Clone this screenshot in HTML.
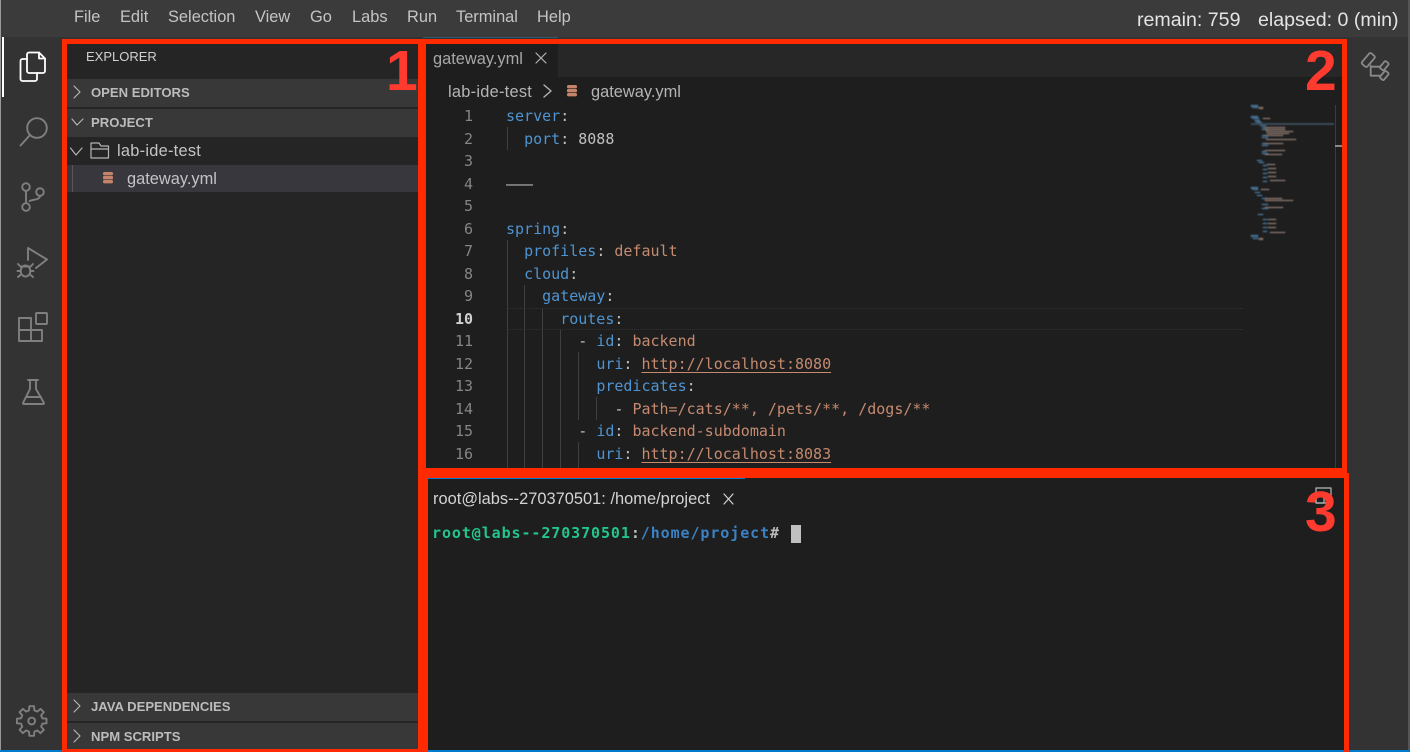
<!DOCTYPE html>
<html><head><meta charset="utf-8"><style>
html,body{margin:0;padding:0;background:#333}
#r{position:relative;width:1410px;height:752px;overflow:hidden;background:#333;font-family:"Liberation Sans",sans-serif}
.b{position:absolute}
.t{position:absolute;white-space:nowrap;font-size:16.4px;line-height:20px;color:#c4c4c4}
.h{position:absolute;white-space:nowrap;font-size:13.1px;font-weight:bold;line-height:16px;color:#bcbcbc}
.n{position:absolute;left:430px;width:43px;text-align:right;font:15px/22px "DejaVu Sans Mono",monospace;color:#858585}
.c{position:absolute;white-space:pre;font:15px/22px "DejaVu Sans Mono",monospace;color:#c0c0c0}
.k{color:#4f94d0}.s{color:#c58a70}.u{color:#c58a70;text-decoration:underline;text-underline-offset:3px}
.g{position:absolute;width:1px;background:#3f3f3f}
.d{position:absolute;font-size:57px;font-weight:bold;line-height:60px;color:#ff3b30}
svg{position:absolute;left:0;top:0;overflow:visible}
</style></head><body><div id="r">
<div class="b" style="left:0;top:0;width:1410px;height:37px;background:#3b3b3b"></div>
<div class="b" style="left:0;top:0;width:1px;height:752px;background:#999"></div>
<div class="b" style="left:1408px;top:0;width:2px;height:752px;background:#555"></div>
<div class="b" style="left:2px;top:37px;width:2px;height:60px;background:#fff"></div>
<div class="b" style="left:0;top:750px;width:1410px;height:2px;background:#007acc"></div>
<div class="b" style="left:423px;top:37px;width:135px;height:1px;background:#2f5a75"></div>

<div class="t" style="left:74px;top:7px">File</div>
<div class="t" style="left:120px;top:7px">Edit</div>
<div class="t" style="left:168px;top:7px">Selection</div>
<div class="t" style="left:255px;top:7px">View</div>
<div class="t" style="left:310px;top:7px">Go</div>
<div class="t" style="left:352px;top:7px">Labs</div>
<div class="t" style="left:407px;top:7px">Run</div>
<div class="t" style="left:456px;top:7px">Terminal</div>
<div class="t" style="left:537px;top:7px">Help</div>
<div class="t" style="left:1137px;top:10px;color:#e4e4e4;font-size:19.6px">remain: 759</div>
<div class="t" style="left:1258px;top:10px;color:#e4e4e4;font-size:19.6px">elapsed: 0 (min)</div>

<!-- sidebar -->
<div class="b" style="left:67px;top:44px;width:351px;height:705px;background:#252526"></div>
<div class="b" style="left:67px;top:79px;width:351px;height:28px;background:#383838"></div>
<div class="b" style="left:67px;top:109px;width:351px;height:28px;background:#383838"></div>
<div class="b" style="left:67px;top:165px;width:351px;height:27px;background:#37373d"></div>
<div class="b" style="left:67px;top:693px;width:351px;height:28px;background:#383838"></div>
<div class="b" style="left:67px;top:723px;width:351px;height:26px;background:#383838"></div>
<div class="b" style="left:72px;top:165px;width:1px;height:27px;background:#585858"></div>
<div class="t" style="left:86px;top:49px;font-size:13px;line-height:16px;color:#d0d0d0">EXPLORER</div>
<div class="h" style="left:91px;top:85px">OPEN EDITORS</div>
<div class="h" style="left:91px;top:115px">PROJECT</div>
<div class="t" style="left:117px;top:141px;letter-spacing:.25px">lab-ide-test</div>
<div class="t" style="left:127px;top:169px">gateway.yml</div>
<div class="h" style="left:91px;top:699px">JAVA DEPENDENCIES</div>
<div class="h" style="left:91px;top:729px">NPM SCRIPTS</div>

<!-- editor -->
<div class="b" style="left:426px;top:44px;width:916px;height:424px;background:#1e1e1e"></div>
<div class="b" style="left:558px;top:44px;width:784px;height:33px;background:#272727"></div>
<div class="t" style="left:433px;top:49px;color:#a8a8a8">gateway.yml</div>
<div class="t" style="left:448px;top:82px;letter-spacing:.25px;color:#b4b4b4">lab-ide-test</div>
<div class="t" style="left:591px;top:82px;color:#b4b4b4">gateway.yml</div>

<div class="b" style="left:507px;top:308px;width:736px;height:22px;border-top:1px dotted #333;border-bottom:1px dotted #333;box-sizing:border-box"></div>

<div class="g" style="left:507px;top:127px;height:23px"></div>
<div class="g" style="left:507px;top:240px;height:228px"></div>
<div class="g" style="left:524px;top:285px;height:183px"></div>
<div class="g" style="left:542px;top:308px;height:160px"></div>
<div class="g" style="left:560px;top:330px;height:138px"></div>
<div class="g" style="left:578px;top:352px;height:68px"></div>
<div class="g" style="left:578px;top:442px;height:26px"></div>
<div class="g" style="left:596px;top:397px;height:23px"></div>

<div class="n" style="top:105px">1</div><div class="c" style="left:506px;top:105px"><span class="k">server</span>:</div>
<div class="n" style="top:127.5px">2</div><div class="c" style="left:506px;top:127.5px">  <span class="k">port</span>: 8088</div>
<div class="n" style="top:150px">3</div>
<div class="n" style="top:172.6px">4</div><div class="c" style="left:506px;top:172.6px">–––</div>
<div class="n" style="top:195.1px">5</div>
<div class="n" style="top:217.6px">6</div><div class="c" style="left:506px;top:217.6px"><span class="k">spring</span>:</div>
<div class="n" style="top:240.2px">7</div><div class="c" style="left:506px;top:240.2px">  <span class="k">profiles</span>: <span class="s">default</span></div>
<div class="n" style="top:262.7px">8</div><div class="c" style="left:506px;top:262.7px">  <span class="k">cloud</span>:</div>
<div class="n" style="top:285.2px">9</div><div class="c" style="left:506px;top:285.2px">    <span class="k">gateway</span>:</div>
<div class="n" style="top:307.8px;color:#d0d0d0;font-weight:bold">10</div><div class="c" style="left:506px;top:307.8px">      <span class="k">routes</span>:</div>
<div class="n" style="top:330.3px">11</div><div class="c" style="left:506px;top:330.3px">        - <span class="k">id</span>: <span class="s">backend</span></div>
<div class="n" style="top:352.8px">12</div><div class="c" style="left:506px;top:352.8px">          <span class="k">uri</span>: <span class="u">http://localhost:8080</span></div>
<div class="n" style="top:375.4px">13</div><div class="c" style="left:506px;top:375.4px">          <span class="k">predicates</span>:</div>
<div class="n" style="top:397.9px">14</div><div class="c" style="left:506px;top:397.9px">            - <span class="s">Path=/cats/**, /pets/**, /dogs/**</span></div>
<div class="n" style="top:420.4px">15</div><div class="c" style="left:506px;top:420.4px">        - <span class="k">id</span>: <span class="s">backend-subdomain</span></div>
<div class="n" style="top:443px">16</div><div class="c" style="left:506px;top:443px">          <span class="k">uri</span>: <span class="u">http://localhost:8083</span></div>

<!-- minimap -->
<svg width="1410" height="752">
<g style="filter:blur(.4px)">
<g fill="#4a7fa8" opacity=".8" stroke="#4a7fa8" stroke-width=".5">
<rect x="1251" y="105" width="7" height="2"/><rect x="1253" y="107" width="5" height="1"/><rect x="1251" y="116" width="7" height="2"/><rect x="1253" y="118" width="6" height="1"/><rect x="1255" y="120" width="5" height="2"/><rect x="1257" y="122" width="5" height="2"/>
<rect x="1260" y="125" width="6" height="1"/><rect x="1262" y="127" width="4" height="1"/><rect x="1262" y="129" width="6" height="1"/><rect x="1262" y="135" width="4" height="1"/><rect x="1262" y="137" width="6" height="1"/><rect x="1262" y="143" width="4" height="1"/><rect x="1262" y="145" width="6" height="1"/><rect x="1262" y="151" width="4" height="1"/><rect x="1262" y="153" width="6" height="1"/>
<rect x="1257" y="160" width="5" height="1"/><rect x="1259" y="162" width="5" height="1"/><rect x="1263" y="165" width="4" height="1"/><rect x="1263" y="169" width="4" height="1"/><rect x="1263" y="173" width="4" height="1"/><rect x="1263" y="177" width="4" height="1"/><rect x="1263" y="181" width="4" height="1"/>
<rect x="1251" y="187" width="7" height="2"/><rect x="1253" y="189" width="5" height="1"/><rect x="1255" y="192" width="5" height="1"/><rect x="1257" y="195" width="5" height="1"/><rect x="1262" y="198" width="4" height="1"/><rect x="1262" y="204" width="6" height="1"/><rect x="1262" y="208" width="6" height="1"/><rect x="1258" y="214" width="5" height="1"/><rect x="1263" y="219" width="4" height="1"/><rect x="1263" y="223" width="4" height="1"/><rect x="1263" y="227" width="4" height="1"/><rect x="1263" y="231" width="4" height="1"/>
<rect x="1251" y="235" width="7" height="2"/><rect x="1253" y="238" width="5" height="1"/>
</g>
<rect x="1251" y="123" width="83" height="2" fill="#3a4a58"/>
<g fill="#8c7a70" opacity=".85" stroke="#8c7a70" stroke-width=".5">
<rect x="1259" y="107" width="4" height="2"/><rect x="1263" y="118" width="7" height="1"/><rect x="1265" y="127" width="20" height="1"/><rect x="1265" y="129" width="20" height="1"/><rect x="1266" y="131" width="27" height="1"/><rect x="1267" y="133" width="22" height="1"/><rect x="1265" y="135" width="18" height="1"/><rect x="1266" y="139" width="30" height="1"/><rect x="1265" y="143" width="18" height="1"/><rect x="1265" y="150" width="20" height="1"/><rect x="1265" y="154" width="17" height="1"/>
<rect x="1267" y="164" width="8" height="1"/><rect x="1268" y="168" width="8" height="1"/><rect x="1268" y="172" width="8" height="1"/><rect x="1268" y="176" width="8" height="1"/><rect x="1270" y="180" width="15" height="1"/>
<rect x="1261" y="189" width="8" height="1"/><rect x="1265" y="198" width="17" height="1"/><rect x="1265" y="200" width="28" height="1"/><rect x="1265" y="207" width="18" height="1"/><rect x="1268" y="219" width="8" height="1"/><rect x="1268" y="223" width="8" height="1"/><rect x="1268" y="227" width="8" height="1"/><rect x="1270" y="232" width="15" height="1"/><rect x="1259" y="238" width="4" height="2"/>
</g>
</g>
<rect x="1335" y="105" width="1" height="363" fill="#3c3c3c"/>
<rect x="1335" y="145" width="7" height="2" fill="#8a8a8a"/>
</svg>

<!-- terminal -->
<div class="b" style="left:428px;top:478px;width:916px;height:272px;background:#1e1e1e"></div>
<div class="b" style="left:428px;top:478px;width:317px;height:1px;background:#007acc"></div>
<div class="t" style="left:433px;top:489px;color:#d4d4d4;letter-spacing:.02px">root@labs--270370501: /home/project</div>
<div class="c" style="left:432px;top:522px;font-weight:bold;letter-spacing:.91px;color:#bbb"><span style="color:#23c58c">root@labs--270370501</span>:<span style="color:#3b82c4">/home/project</span>#</div>
<div class="b" style="left:791px;top:525px;width:10px;height:18px;background:#c0c0c0"></div>

<!-- red frames -->
<div class="b" style="left:62px;top:39px;width:5px;height:713px;background:#ff2a00"></div>
<div class="b" style="left:62px;top:39px;width:1285px;height:5px;background:#ff2a00"></div>
<div class="b" style="left:418px;top:39px;width:8px;height:713px;background:#ff2a00"></div>
<div class="b" style="left:426px;top:468px;width:921px;height:10px;background:#ff2a00"></div>
<div class="b" style="left:426px;top:473px;width:923px;height:5px;background:#ff2a00"></div>
<div class="b" style="left:426px;top:468px;width:2px;height:284px;background:#ff2a00"></div>
<div class="b" style="left:1342px;top:39px;width:5px;height:435px;background:#ff2a00"></div>
<div class="b" style="left:1344px;top:473px;width:5px;height:279px;background:#ff2a00"></div>
<div class="b" style="left:62px;top:749px;width:364px;height:3px;background:#ff2a00"></div>

<!-- icons -->
<svg width="1410" height="752" fill="none" stroke-linejoin="round" stroke-linecap="round">
<g stroke="#ffffff" stroke-width="1.8">
<path d="M27 59H22.5a2 2 0 0 0-2 2V79a2 2 0 0 0 2 2H35a2 2 0 0 0 2-2V73"/>
<path d="M29 52.5H39L45 58.500V71a2 2 0 0 1-2 2H29a2 2 0 0 1-2-2V54.500a2 2 0 0 1 2-2Z"/>
<path d="M39 52.500V58.500H45"/>
</g>
<g stroke="#7f7f7f" stroke-width="1.9">
<circle cx="37" cy="128" r="9.800"/><path d="M30 135L20.500 145.500"/>
<circle cx="26" cy="187" r="3.800"/><circle cx="40" cy="192" r="3.800"/><circle cx="26" cy="207" r="3.800"/>
<path d="M26 191V203M29.500 201C35 199 39 200 40 196"/>
<path d="M28 260V248L47 259.500L36 268"/>
<ellipse cx="25.500" cy="271" rx="4.800" ry="5.500"/><path d="M21 266.500H30M18 264L21 267M33 264L30 267M18 277L21 274.500M33 277L30 274.500M17.500 271H20.500M30.500 271H33.500"/>
<path d="M19 318H31V330H42V341H19ZM19 330H31M31 330V341"/>
<rect x="36" y="313" width="11" height="11" rx="1"/>
<path d="M28 380H38M30 380V389L23 403a1 1 0 0 0 1 1H43a1 1 0 0 0 1-1L36 389V380M26 397H41"/>
<g transform="translate(31.700 721)">
<circle r="3.400"/>
<path d="M10.670 -2.660L14.800 -2.350L14.800 2.350L10.670 2.660L9.430 5.670L12.140 8.820L8.820 12.140L5.670 9.430L2.660 10.670L2.350 14.800L-2.350 14.800L-2.660 10.670L-5.670 9.430L-8.820 12.140L-12.140 8.820L-9.430 5.670L-10.670 2.660L-14.800 2.350L-14.800 -2.350L-10.670 -2.660L-9.430 -5.670L-12.140 -8.820L-8.820 -12.140L-5.670 -9.430L-2.660 -10.670L-2.350 -14.800L2.350 -14.800L2.660 -10.670L5.670 -9.430L8.820 -12.140L12.140 -8.820L9.430 -5.670Z"/>
</g>
</g>
<g stroke="#8a8a8a" stroke-width="1.800">
<rect x="-3.500" y="-7" width="7" height="14" rx="1.500" transform="translate(1368.300 60) rotate(40)"/>
<rect x="-2.500" y="-4.500" width="5" height="9" rx="1.200" transform="translate(1384.300 65.700) rotate(40)"/>
<rect x="-2.500" y="-4.500" width="5" height="9" rx="1.200" transform="translate(1384.300 75.500) rotate(40)"/>
<path d="M1370.700 65.500V75.700H1380M1370.700 66.700H1380"/>
</g>
<g stroke="#b4b4b4" stroke-width="1.200">
<path d="M74 86L80 92L74 98"/>
<path d="M74 730L80 736L74 742"/>
<path d="M74 700L80 706L74 712"/>
<path d="M72 119L77 125L83 119"/>
<path d="M70.500 148L76 155L82 148"/>
<path d="M91 158V143H99L101 146H108.500V158ZM91 149H108.500"/>
<path d="M536 53L546 63M546 53L536 63"/>
<path d="M544 85L551 91L544 97" stroke-width="1.400"/>
<path d="M724 494L733 504M733 494L724 504" stroke="#d4d4d4"/>
</g>
<g fill="#c5836a" stroke="none">
<rect x="103" y="172" width="10" height="3.400" rx="1.500"/><rect x="103" y="176" width="10" height="3.400" rx="1"/><rect x="103" y="180" width="10" height="3.400" rx="1.500"/>
<rect x="567" y="85" width="10" height="3.400" rx="1.500"/><rect x="567" y="89" width="10" height="3.400" rx="1"/><rect x="567" y="93" width="10" height="3.400" rx="1.500"/>
</g>
<g stroke="#b8b8b8" stroke-width="1.200">
<rect x="1316" y="488" width="15" height="15"/><rect x="1316" y="495" width="8" height="8"/>
</g>
</svg>

<div class="d" style="left:386px;top:41px">1</div>
<div class="d" style="left:1305px;top:41px">2</div>
<div class="d" style="left:1305px;top:482px">3</div>
</div></body></html>
